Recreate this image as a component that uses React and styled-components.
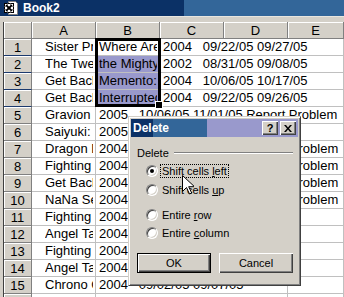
import React from 'react'
import styled, { createGlobalStyle } from 'styled-components'

const GlobalStyle = createGlobalStyle`
  html, body {
    margin: 0;
    padding: 0;
    background: #d4d0c8;
  }
  body {
    font-family: "Liberation Sans", Arial, sans-serif;
  }
`

const columns = ['A', 'B', 'C', 'D', 'E']

const rows = [
  { n: 1, sel: true, cells: [{ t: 'Sister Princess' }, { t: 'Where Are You Going' }, { t: '2004   09/22/05 09/27/05', span: 3 }] },
  { n: 2, sel: true, cells: [{ t: 'The Twelve Kingdoms' }, { t: 'the Mighty', hi: true }, { t: '2002   08/31/05 09/08/05', span: 3 }] },
  { n: 3, sel: true, cells: [{ t: 'Get Backers' }, { t: 'Memento: Mori', hi: true }, { t: '2004   10/06/05 10/17/05', span: 3 }] },
  { n: 4, sel: true, cells: [{ t: 'Get Backers' }, { t: 'Interrupted', hi: true }, { t: '2004   09/22/05 09/26/05', span: 3 }] },
  { n: 5, cells: [{ t: 'Gravion Zwei' }, { t: '2005   10/06/05 11/01/05 Report Problem', span: 4 }] },
  { n: 6, cells: [{ t: 'Saiyuki: Reload' }, { t: '2005   10/06/05 11/01/05', span: 3 }, { t: '' }] },
  { n: 7, cells: [{ t: 'Dragon Drive' }, { t: '2004   09/22/05 10/04/05 Report Problem', span: 4 }] },
  { n: 8, cells: [{ t: 'Fighting Beauty' }, { t: '2004   09/22/05 10/04/05 Report Problem', span: 4 }] },
  { n: 9, cells: [{ t: 'Get Backers' }, { t: '2004   09/22/05 10/04/05 Report Problem', span: 4 }] },
  { n: 10, cells: [{ t: 'NaNa Series' }, { t: '2004   09/22/05 10/04/05 Report Problem', span: 4 }] },
  { n: 11, cells: [{ t: 'Fighting Beauty' }, { t: '2004   09/02/05 09/07/05', span: 3 }, { t: '' }] },
  { n: 12, cells: [{ t: 'Angel Tales' }, { t: '2004   09/02/05 09/07/05', span: 3 }, { t: '' }] },
  { n: 13, cells: [{ t: 'Fighting Beauty' }, { t: '2004   09/02/05 09/07/05', span: 3 }, { t: '' }] },
  { n: 14, cells: [{ t: 'Angel Tales' }, { t: '2004   09/02/05 09/07/05', span: 3 }, { t: '' }] },
  { n: 15, cells: [{ t: 'Chrono Crusade' }, { t: '2004   09/02/05 09/07/05', span: 3 }, { t: '' }] },
  { n: 16, cells: [{ t: '' }, { t: '', span: 3 }, { t: '' }] },
]

function Landing() {
  return (
    <Window>
      <GlobalStyle />
      <TitleBar>
        <BookIcon />
        <span>Book2</span>
      </TitleBar>
      <FrameStrip />
      <Sheet>
        <Corner />
        {columns.map((c) => (
          <ColHead key={c}>{c}</ColHead>
        ))}
        {rows.map((r) => (
          <React.Fragment key={r.n}>
            <RowHead $sel={r.sel}>{r.n}</RowHead>
            {r.cells.map((c, i) => (
              <Cell key={i} $span={c.span || 1} $pad={i === 0 ? 13 : 3} $hi={c.hi}>
                <CellText>{c.t}</CellText>
              </Cell>
            ))}
          </React.Fragment>
        ))}
        <Selection>
          <FillHandle />
        </Selection>
      </Sheet>

      <Dialog>
        <DialogTitle>
          <span>Delete</span>
          <CaptionButtons>
            <CapButton>?</CapButton>
            <CapButton>
              <svg width="8" height="7" viewBox="0 0 8 7">
                <path d="M0 0h2l2 2.5L6 0h2L5 3.5 8 7H6L4 4.5 2 7H0l3-3.5z" fill="#000" />
              </svg>
            </CapButton>
          </CaptionButtons>
        </DialogTitle>
        <DialogBody>
          <GroupHead>
            <span>Delete</span>
            <Etched />
          </GroupHead>
          <Options>
            <Option $gap={3}>
              <Radio $checked />
              <OptionLabel $focus>Shift cells <u>l</u>eft</OptionLabel>
            </Option>
            <Option $gap={3}>
              <Radio />
              <OptionLabel>Shift cells <u>u</u>p</OptionLabel>
            </Option>
            <Option $gap={9}>
              <Radio />
              <OptionLabel>Entire <u>r</u>ow</OptionLabel>
            </Option>
            <Option $gap={2}>
              <Radio />
              <OptionLabel>Entire <u>c</u>olumn</OptionLabel>
            </Option>
          </Options>
          <ButtonRow>
            <PushButton $default>OK</PushButton>
            <PushButton>Cancel</PushButton>
          </ButtonRow>
        </DialogBody>
      </Dialog>

      <Cursor width="12" height="20" viewBox="0 0 12 20">
        <path d="M0.5 0.5v16l4-4 3 6.5 2.2-1-3-6.3h5.8z" fill="#fff" stroke="#000" strokeWidth="1" />
      </Cursor>
    </Window>
  )
}

function BookIcon() {
  return (
    <svg width="16" height="16" viewBox="0 0 16 16">
      <path d="M5.5 1.5h7l2 2v11h-9z" fill="#fff" stroke="#808080" />
      <rect x="1.5" y="3.5" width="9" height="9" fill="#fff" stroke="#000" />
      <path d="M1.5 6.5h9M1.5 9.5h9M4.5 3.5v9M7.5 3.5v9" stroke="#808080" />
      <path d="M3 5l6 6M9 5l-6 6" stroke="#000" strokeWidth="1.6" />
    </svg>
  )
}

const Window = styled.div`
  position: relative;
  width: 344px;
  height: 297px;
  overflow: hidden;
  background: #d4d0c8;
  display: flex;
  flex-direction: column;
`

const TitleBar = styled.div`
  height: 16px;
  flex: none;
  display: flex;
  align-items: center;
  gap: 4px;
  padding-left: 3px;
  background: linear-gradient(to right, #0b3166 184px, #336699 184px);
  color: #fff;
  font: bold 12px "Liberation Sans", Arial, sans-serif;
`

const FrameStrip = styled.div`
  height: 6px;
  flex: none;
  background: #d4d0c8;
  border-top: 1px solid #e8e6e0;
  box-sizing: border-box;
`

const Sheet = styled.div`
  position: relative;
  flex: 1;
  min-height: 0;
  overflow: hidden;
  margin-left: 3px;
  border-left: 1px solid #404040;
  background: #fff;
  display: grid;
  grid-template-columns: 28px 64px 64px 64px 64px 1fr;
  grid-auto-rows: 17px;
  align-content: start;
`

const HeadBase = styled.div`
  box-sizing: border-box;
  background: #d4d0c8;
  border-right: 1px solid #808080;
  border-bottom: 1px solid #808080;
  box-shadow: inset 1px 1px #fff;
  display: flex;
  align-items: center;
  justify-content: center;
  font-size: 13px;
  color: #000;
`

const Corner = styled(HeadBase)``

const ColHead = styled(HeadBase)``

const RowHead = styled(HeadBase)`
  border-bottom-color: ${(p) => (p.$sel ? '#1c3a6e' : '#808080')};
`

const Cell = styled.div`
  grid-column: span ${(p) => p.$span};
  box-sizing: border-box;
  border-right: 1px solid #c0c0c0;
  border-bottom: 1px solid #c0c0c0;
  background: ${(p) => (p.$hi ? '#9999cc' : '#fff')};
  padding-left: ${(p) => p.$pad}px;
  padding-right: 2px;
  font-size: 13px;
  line-height: 16px;
  color: #000;
  min-width: 0;
`

const CellText = styled.span`
  display: block;
  overflow: hidden;
  white-space: pre;
`

const Selection = styled.div`
  position: absolute;
  left: 91px;
  top: 16px;
  width: 66px;
  height: 69px;
  box-sizing: border-box;
  border: 3px solid #000;
  pointer-events: none;
`

const FillHandle = styled.div`
  position: absolute;
  right: -5px;
  bottom: -5px;
  width: 6px;
  height: 6px;
  background: #000;
  border: 1px solid #fff;
`

const Dialog = styled.div`
  position: absolute;
  left: 128px;
  top: 116px;
  width: 173px;
  height: 170px;
  box-sizing: border-box;
  background: #d4d0c8;
  border: 1px solid;
  border-color: #d4d0c8 #404040 #404040 #d4d0c8;
  box-shadow: inset 1px 1px #fff, inset -1px -1px #808080;
  padding: 2px;
  display: flex;
  flex-direction: column;
  font-family: "Liberation Sans", Arial, sans-serif;
  font-size: 11px;
  color: #000;
`

const DialogTitle = styled.div`
  height: 18px;
  flex: none;
  display: flex;
  align-items: center;
  justify-content: space-between;
  padding: 0 2px;
  background: linear-gradient(to right, #0b3166 22px, #336699 22px, #336699 76px, #9999cc 76px);
  color: #fff;
  font-weight: bold;
  font-size: 12px;
`

const CaptionButtons = styled.div`
  display: flex;
  gap: 2px;
`

const CapButton = styled.div`
  width: 16px;
  height: 14px;
  box-sizing: border-box;
  background: #d4d0c8;
  box-shadow: inset 1px 1px #fff, inset -1px -1px #404040, inset -2px -2px #808080;
  display: flex;
  align-items: center;
  justify-content: center;
  color: #000;
  font-size: 11px;
  font-weight: bold;
`

const DialogBody = styled.div`
  padding: 9px 5px 0 6px;
  display: flex;
  flex-direction: column;
`

const GroupHead = styled.div`
  height: 14px;
  display: flex;
  align-items: center;
  gap: 5px;
`

const Etched = styled.div`
  flex: 1;
  height: 0;
  border-top: 1px solid #808080;
  border-bottom: 1px solid #fff;
`

const Options = styled.div`
  display: flex;
  flex-direction: column;
  padding-left: 9px;
`

const Option = styled.div`
  height: 16px;
  margin-top: ${(p) => p.$gap}px;
  display: flex;
  align-items: center;
  gap: 2px;
`

const Radio = styled.span`
  width: 12px;
  height: 12px;
  flex: none;
  box-sizing: border-box;
  border-radius: 50%;
  background: #fff;
  border: 1px solid;
  border-color: #808080 #fff #fff #808080;
  box-shadow: inset 1px 1px #404040, inset -1px -1px #d4d0c8;
  display: flex;
  align-items: center;
  justify-content: center;

  &::after {
    content: '';
    width: 4px;
    height: 4px;
    border-radius: 50%;
    background: ${(p) => (p.$checked ? '#000' : 'transparent')};
  }
`

const OptionLabel = styled.span`
  height: 14px;
  line-height: 12px;
  box-sizing: border-box;
  padding: 0 1px;
  border: 1px dotted ${(p) => (p.$focus ? '#000' : 'transparent')};
  white-space: nowrap;
`

const ButtonRow = styled.div`
  display: flex;
  gap: 8px;
  margin-top: 12px;
`

const PushButton = styled.div`
  width: 74px;
  height: 20px;
  box-sizing: border-box;
  display: flex;
  align-items: center;
  justify-content: center;
  background: #d4d0c8;
  border: ${(p) => (p.$default ? '1px solid #000' : 'none')};
  box-shadow: inset 1px 1px #fff, inset -1px -1px #404040, inset -2px -2px #808080;
`

const Cursor = styled.svg`
  position: absolute;
  left: 182px;
  top: 175px;
  pointer-events: none;
`

export default Landing
